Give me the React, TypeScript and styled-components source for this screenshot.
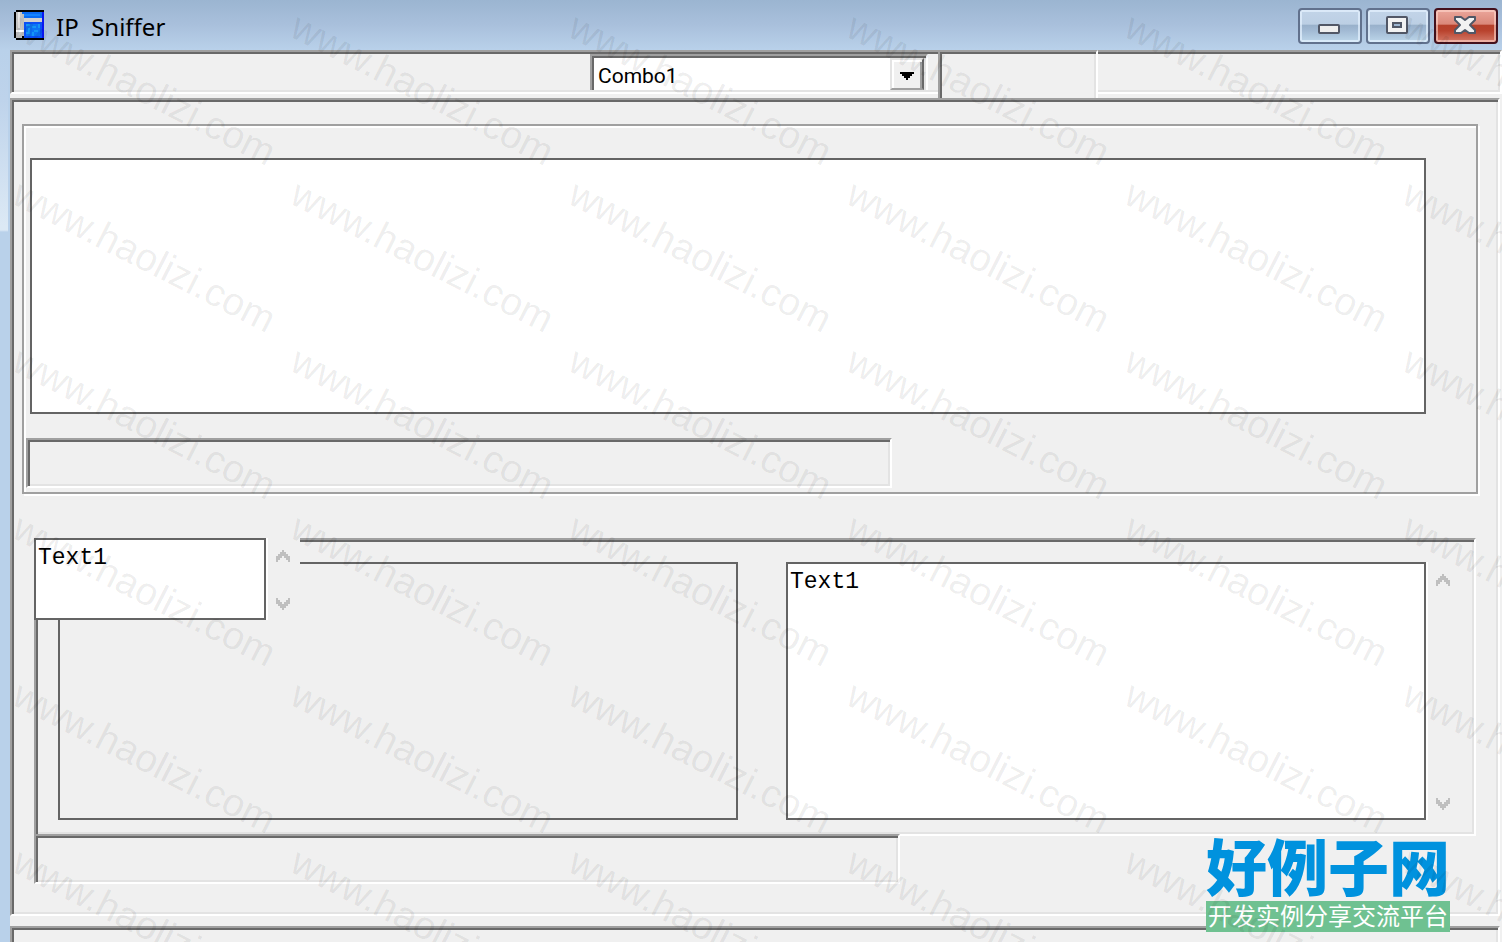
import React from 'react';
import styled, { createGlobalStyle, css } from 'styled-components';

const GlobalStyle = createGlobalStyle`
  *, *::before, *::after { box-sizing: border-box; }
  body { margin: 0; background: #f0f0f0; font-family: "Noto Sans", sans-serif; }
`;

const sunken = css`
  border: 2px solid;
  border-color: #a0a0a0 #fff #fff #a0a0a0;
  box-shadow: inset 2px 2px 0 #696969, inset -2px -2px 0 #e3e3e3;
  padding: 2px;
`;

const Window = styled.div`
  position: relative;
  display: flex;
  flex-direction: column;
  min-height: 100vh;
  overflow: hidden;
  background: #b9d1ea;
`;

const TitleBar = styled.header`
  display: flex;
  align-items: center;
  height: 50px;
  padding: 0 4px 0 14px;
  background: linear-gradient(#9bb5d1, #a9c0dc 50%, #b9d1ea);
`;

const Title = styled.h1`
  flex: 1;
  margin: 0;
  padding: 4px 0 0 12px;
  font-size: 24px;
  font-weight: 400;
  line-height: 32px;
  white-space: pre;
  color: #000;
`;

const Controls = styled.div`
  display: flex;
  gap: 4px;
  padding-top: 2px;
`;

const ControlButton = styled.button<{ $danger?: boolean }>`
  display: flex;
  align-items: center;
  justify-content: center;
  width: 64px;
  height: 36px;
  padding: 0 2px 2px 0;
  border: 2px solid ${p => (p.$danger ? '#43101c' : '#61718d')};
  border-radius: 4px;
  box-shadow: inset 0 0 0 2px ${p => (p.$danger ? 'rgba(255,215,205,.6)' : 'rgba(230,242,255,.7)')};
  background: ${p =>
    p.$danger
      ? 'linear-gradient(#eba69b, #da8779 45%, #b5402b 46%, #b9432e 65%, #d47a69)'
      : 'linear-gradient(#c2d4e8, #bccfe4 45%, #98b0ca 46%, #a2bad4 65%, #bdd6ea)'};
`;

const Body = styled.div`
  display: flex;
  flex: 1;
`;

const GlassEdge = styled.div`
  flex: none;
  width: 10px;
  border-right: 2px solid #b9d1ea;
  background: linear-gradient(#b9d1ea, #bed3eb 50px, #dce9f5 176px, #dce9f5 180px, #b9d1ea 182px);
`;

const Client = styled.main`
  display: flex;
  flex: 1;
  flex-direction: column;
  min-width: 0;
  background: #f0f0f0;
`;

const Toolbar = styled.div`
  display: grid;
  grid-template-columns: 928fr 160fr 404fr;
  height: 48px;
`;

const ComboPane = styled.div`
  ${sunken}
  display: grid;
  grid-template-columns: 1fr 338px;
  height: 44px;
  padding: 2px 10px 2px 2px;
  border-right: 0;
  box-shadow: inset 2px 2px 0 #696969, inset 0 -2px 0 #e3e3e3;
`;

const MiddlePane = styled.div`
  ${sunken}
  border-bottom: 0;
  box-shadow: inset 2px 2px 0 #696969, inset -2px 0 0 #e3e3e3;
`;

const EndPane = styled.div`
  ${sunken}
  height: 44px;
  border-left: 0;
  box-shadow: inset 0 2px 0 #696969, inset -2px -2px 0 #e3e3e3;
`;

const Combo = styled.label`
  ${sunken}
  grid-column: 2;
  display: flex;
  height: 36px;
  border-bottom: 0;
  padding: 2px 2px 0;
  box-shadow: inset 2px 2px 0 #696969, inset -2px 0 0 #e3e3e3;
`;

const ComboSelect = styled.select`
  flex: 1;
  min-width: 0;
  height: 32px;
  padding: 4px 4px 0;
  border: 0;
  outline: 0;
  appearance: none;
  background: #fff;
  color: #000;
  font: 21px/28px Roboto, sans-serif;
`;

const ComboArrow = styled.span`
  display: flex;
  align-items: center;
  justify-content: center;
  width: 34px;
  height: 32px;
  padding-top: 4px;
  border: 2px solid;
  border-color: #e3e3e3 #696969 #a0a0a0 #e3e3e3;
  box-shadow: inset 2px 2px 0 #fff, inset -2px 0 0 #a0a0a0;
  background: #f0f0f0;
`;

const MainPanel = styled.section`
  ${sunken}
  display: flex;
  flex: 1;
  flex-direction: column;
  margin-right: 2px;
  padding: 24px 2px 30px;
`;

const PacketGroup = styled.fieldset`
  min-width: 0;
  margin: 0 18px 44px 8px;
  padding: 32px 0 4px 2px;
  border: 2px solid #a0a0a0;
  box-shadow: 2px 2px 0 #fff, inset 2px 2px 0 #fff;
`;

const PacketList = styled.div`
  height: 256px;
  margin: 0 50px 24px 4px;
  border: 2px solid #646464;
  background: #fff;
`;

const StatusRow = styled.div<{ $rest: number }>`
  display: grid;
  grid-template-columns: 866fr ${p => p.$rest}fr;
`;

const Status = styled.div`
  ${sunken}
  height: 50px;
`;

const Details = styled.section`
  position: relative;
  margin: 0 20px;
`;

const DetailFrame = styled.div`
  ${sunken}
  display: grid;
  grid-template-columns: 680fr 48px 640fr 34px;
  height: 298px;
  margin-bottom: -2px;
  padding: 22px 14px 14px 22px;
`;

const TreePane = styled.div`
  border: 2px solid #646464;
`;

const TextBox = styled.textarea`
  display: block;
  width: 100%;
  height: 100%;
  margin: 0;
  padding: 4px 2px;
  border: 2px solid #646464;
  border-radius: 0;
  outline: 0;
  resize: none;
  overflow: hidden;
  box-shadow: 2px 0 0 #fff;
  background: #fff;
  color: #000;
  font: 23px/28px "Liberation Mono", monospace;
`;

const DataPane = styled.div`
  grid-column: 3;
`;

const ScrollTrack = styled.div`
  display: flex;
  flex-direction: column;
  align-items: center;
  justify-content: space-between;
  padding: 12px 0 10px;
`;

const FloatingEditor = styled.div`
  position: absolute;
  top: 0;
  left: 0;
  display: grid;
  grid-template-columns: 232px 34px;
  height: 82px;
  background: #f0f0f0;
`;

const BottomPanel = styled.div`
  ${sunken}
  height: 16px;
  margin: 10px 2px 0 0;
  border-bottom: 0;
  box-shadow: inset 2px 2px 0 #696969, inset -2px 0 0 #e3e3e3;
`;

const Brand = styled.div`
  position: absolute;
  right: 52px;
  bottom: 10px;
  width: 244px;
  font-family: "Noto Sans CJK SC", sans-serif;
  text-align: center;
  white-space: nowrap;
`;

const BrandName = styled.div`
  color: #0092de;
  font-size: 61px;
  font-weight: 900;
  line-height: 72px;
`;

const BrandLine = styled.div`
  height: 31px;
  background: #6fc191;
  color: #fff;
  font-size: 24px;
  line-height: 28px;
`;

const WatermarkLayer = styled.div`
  position: absolute;
  inset: 0;
  display: grid;
  grid-template-columns: repeat(6, 278px);
  grid-auto-rows: 167px;
  padding: 4px 0 0 16px;
  overflow: hidden;
  pointer-events: none;
`;

const Watermark = styled.span`
  color: rgba(0, 0, 0, 0.075);
  font: 39px/40px "Liberation Sans", sans-serif;
  white-space: nowrap;
  transform: rotate(27deg);
  transform-origin: 0 20px;
`;

function AppIcon() {
  return (
    <svg width="30" height="30" viewBox="0 0 30 30" aria-hidden="true" shapeRendering="crispEdges">
      <path d="M2 0h28v30H2v-2H0V2h2z" fill="#000" />
      <path d="M2 2h6v26H2z" fill="#c4c4c4" />
      <path d="M4 2h2v16H4z" fill="#e8e8e8" />
      <path d="M8 2h20v6H8z" fill="#0a6cf5" />
      <path d="M10 4h16v2H10z" fill="#1484ff" />
      <path d="M8 8h20v4H8z" fill="#cfcfcf" />
      <path d="M10 12h20v16H10z" fill="#0a50f5" />
      <path d="M28 2h2v26h-2z" fill="#0a18f0" />
      <path d="M8 4h2v22H8z" fill="#bdbdbd" />
      <path d="M2 20h8v2H2z" fill="#fff" />
      <path d="M12 14h14v12H12z" fill="#0c74f5" />
      <path d="M12 14h4v2h-4zM18 16h4v2h-4zM14 18h2v4h-2zM20 20h4v2h-4zM12 22h4v2h-4zM18 22h2v4h-2zM24 14h2v4h-2z" fill="#1496f5" />
    </svg>
  );
}

function MinimizeGlyph() {
  return (
    <svg width="22" height="18" viewBox="0 0 22 18" aria-hidden="true">
      <rect x="1" y="9" width="20" height="8" rx="1" fill="#eee" stroke="#515766" strokeWidth="2" />
    </svg>
  );
}

function MaximizeGlyph() {
  return (
    <svg width="22" height="18" viewBox="0 0 22 18" aria-hidden="true">
      <rect x="1" y="1" width="20" height="16" rx="1" fill="#f2f2f2" stroke="#515766" strokeWidth="2" />
      <rect x="7" y="7" width="8" height="4" fill="#9db5d0" stroke="#515766" strokeWidth="2" />
    </svg>
  );
}

function CloseGlyph() {
  return (
    <svg width="22" height="18" viewBox="0 0 22 18" aria-hidden="true">
      <path
        d="M1 1h6l4 3 4-3h6v3l-5 5 5 5v3h-6l-4-3-4 3H1v-3l5-5-5-5z"
        fill="#f2f2f2"
        stroke="#515766"
        strokeWidth="2"
        strokeLinejoin="round"
      />
    </svg>
  );
}

function Chevron({ down }: { down?: boolean }) {
  return (
    <svg width="14" height="12" viewBox="0 0 14 12" aria-hidden="true" shapeRendering="crispEdges">
      <path
        d={
          down
            ? 'M0 0h2v2h2v2h2v2h2V4h2V2h2V0h2v6h-2v2h-2v2H8v2H6v-2H4V8H2V6H0z'
            : 'M6 0h2v2h2v2h2v2h2v6h-2v-2h-2V8H8V6H6v2H4v2H2v2H0V6h2V4h2V2h2z'
        }
        fill="#bfbfbf"
      />
    </svg>
  );
}

function Scrollbar() {
  return (
    <ScrollTrack aria-hidden="true">
      <Chevron />
      <Chevron down />
    </ScrollTrack>
  );
}

export default function App() {
  return (
    <>
      <GlobalStyle />
      <Window>
        <TitleBar>
          <AppIcon />
          <Title>{'IP  Sniffer'}</Title>
          <Controls>
            <ControlButton aria-label="Minimize"><MinimizeGlyph /></ControlButton>
            <ControlButton aria-label="Maximize"><MaximizeGlyph /></ControlButton>
            <ControlButton aria-label="Close" $danger><CloseGlyph /></ControlButton>
          </Controls>
        </TitleBar>
        <Body>
          <GlassEdge />
          <Client>
            <Toolbar>
              <ComboPane>
                <Combo>
                  <ComboSelect aria-label="Network adapter">
                    <option>Combo1</option>
                  </ComboSelect>
                  <ComboArrow aria-hidden="true">
                    <svg width="14" height="8" viewBox="0 0 14 8" shapeRendering="crispEdges">
                      <path d="M0 0h14v2h-2v2h-2v2H8v2H6V6H4V4H2V2H0z" />
                    </svg>
                  </ComboArrow>
                </Combo>
              </ComboPane>
              <MiddlePane />
              <EndPane />
            </Toolbar>
            <MainPanel>
              <PacketGroup aria-label="Packets">
                <PacketList />
                <StatusRow $rest={584}>
                  <Status />
                </StatusRow>
              </PacketGroup>
              <Details>
                <DetailFrame>
                  <TreePane />
                  <DataPane>
                    <TextBox aria-label="Packet data" defaultValue="Text1" spellCheck={false} />
                  </DataPane>
                  <Scrollbar />
                </DetailFrame>
                <StatusRow $rest={576}>
                  <Status />
                </StatusRow>
                <FloatingEditor>
                  <TextBox aria-label="Notes" defaultValue="Text1" spellCheck={false} />
                  <Scrollbar />
                </FloatingEditor>
              </Details>
            </MainPanel>
            <BottomPanel />
          </Client>
        </Body>
        <Brand>
          <BrandName>好例子网</BrandName>
          <BrandLine>开发实例分享交流平台</BrandLine>
        </Brand>
        <WatermarkLayer aria-hidden="true">
          {Array.from({ length: 36 }, (_, i) => (
            <Watermark key={i}>www.haolizi.com</Watermark>
          ))}
        </WatermarkLayer>
      </Window>
    </>
  );
}
